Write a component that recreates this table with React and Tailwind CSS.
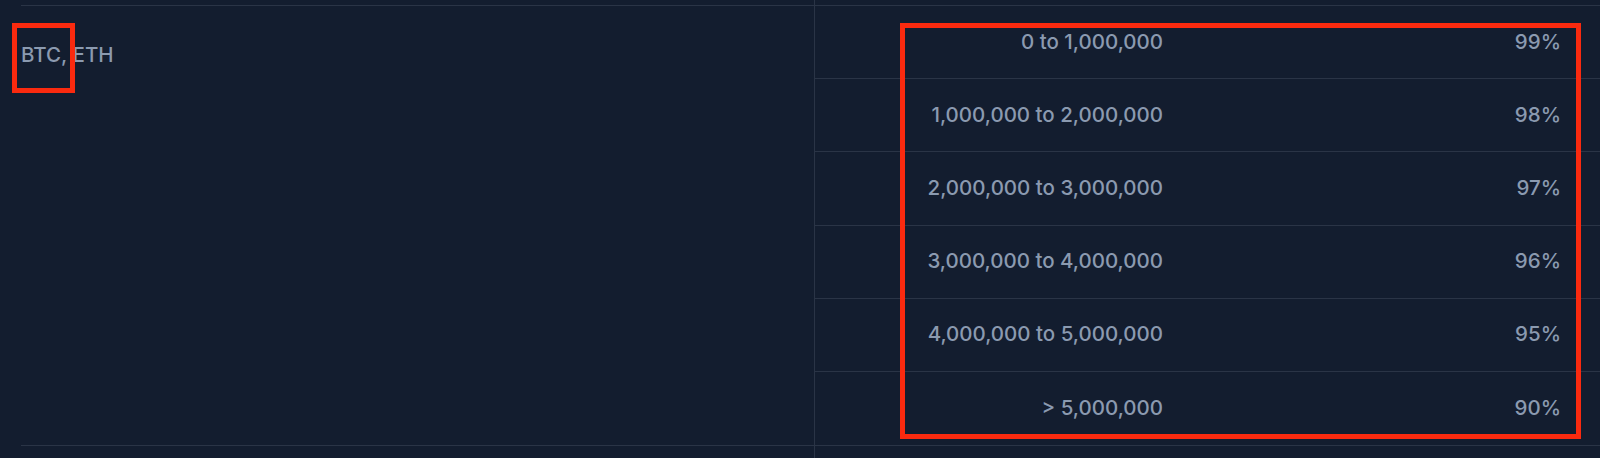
import React from 'react';

const TIERS = [
  { range: '0 to 1,000,000', rate: '99%' },
  { range: '1,000,000 to 2,000,000', rate: '98%' },
  { range: '2,000,000 to 3,000,000', rate: '97%' },
  { range: '3,000,000 to 4,000,000', rate: '96%' },
  { range: '4,000,000 to 5,000,000', rate: '95%' },
  { range: '> 5,000,000', rate: '90%' },
];

function App() {
  return (
    <div
      className="relative min-h-screen w-full overflow-hidden bg-[#131d2f] text-[20.5px] font-medium text-[#8b9ab0]"
      style={{ fontFamily: 'Inter, "Noto Sans", sans-serif' }}
    >
      <div className="ml-[21px]">
        {/* previous row tail */}
        <div className="flex h-[5px]">
          <div className="w-[794px] border-r border-[#2a3446]" />
        </div>

        <div className="flex border-y border-[#2a3446]">
          <div className="w-[794px] border-r border-[#2a3446] pt-[34px]">
            BTC, ETH
          </div>
          <div className="flex-1">
            {TIERS.map((t, i) => (
              <div
                key={t.range}
                className={`flex h-[73.2px] items-center ${
                  i < TIERS.length - 1 ? 'border-b border-[#2a3446]' : ''
                }`}
              >
                <div className="w-[372px] pr-[24px] text-right">{t.range}</div>
                <div className="flex-1 pr-[39px] text-right">{t.rate}</div>
              </div>
            ))}
          </div>
        </div>

        {/* next row head */}
        <div className="flex h-[20px]">
          <div className="w-[794px] border-r border-[#2a3446]" />
        </div>
      </div>

      {/* annotation boxes */}
      <div className="absolute left-[12px] top-[23px] h-[70px] w-[63px] border-[5px] border-[#fa2a0f]" />
      <div className="absolute left-[900px] top-[23px] h-[416px] w-[681px] border-[5px] border-[#fa2a0f]" />
    </div>
  );
}

export default App;
